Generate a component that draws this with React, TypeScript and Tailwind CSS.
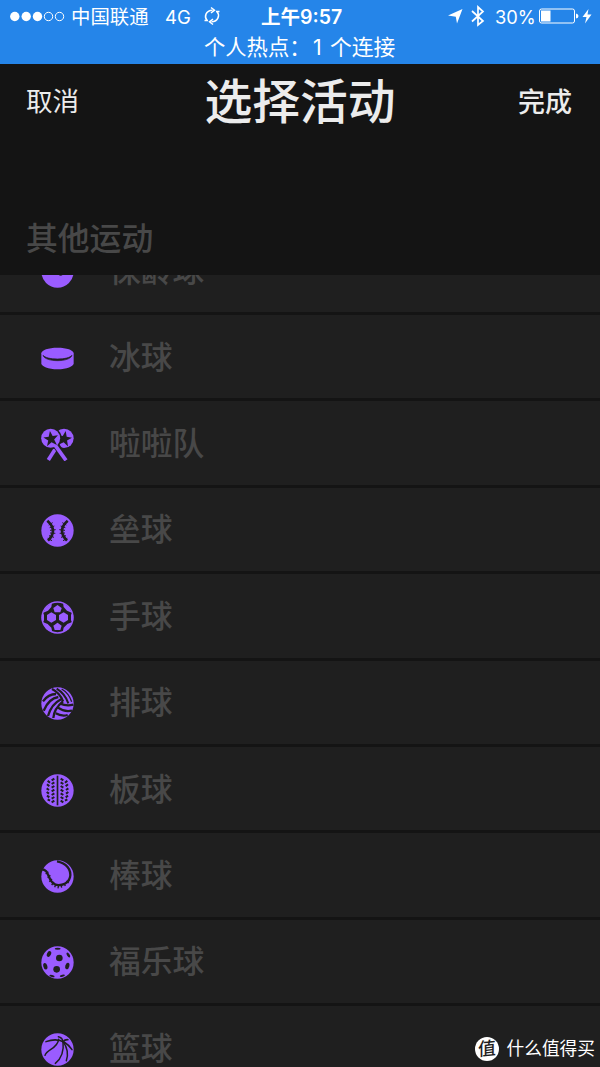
import type { ReactNode } from "react";

const INK = "#1f1f1f";
const PURPLE = "#9a5cff";

function Disc({ children }: { children?: ReactNode }) {
  return (
    <svg viewBox="0 0 99 99" className="block size-[33px]" fill={INK} stroke="none">
      <circle cx="49.5" cy="49.5" r="48.5" fill={PURPLE} />
      {children}
    </svg>
  );
}

const Bowling = () => (
  <Disc>
    <circle cx="59" cy="55" r="7" />
    <circle cx="42" cy="30" r="6" />
    <circle cx="66" cy="28" r="6" />
  </Disc>
);

const Puck = () => (
  <svg viewBox="0 0 99 99" className="block size-[33px]">
    <path d="M1 34C1 24 22 17 49.500 17S98 24 98 34V64C98 74 77 82 49.500 82S1 74 1 64Z" fill={PURPLE} />
    <path d="M6 40C10 51 29 56 49.500 56S89 51 93 40C87 47 70 51 49.500 51S12 47 6 40Z" fill={INK} stroke={INK} strokeWidth="2" />
  </svg>
);

const STAR = "M0 -23L6 -7L22 -7L9 4L15 21L0 11L-15 21L-9 4L-22 -7L-6 -7Z";

const PomPoms = () => (
  <svg viewBox="0 0 99 99" className="block size-[33px]">
    <path d="M56 42L22 96" stroke={PURPLE} strokeWidth="11" />
    <circle cx="69" cy="31" r="29" fill={PURPLE} />
    <path d={STAR} transform="translate(70 32) rotate(10)" fill={INK} />
    <path d="M41 46L78 99" stroke={INK} strokeWidth="20" />
    <circle cx="29" cy="31" r="33" fill={INK} />
    <path d="M41 50L75 97" stroke={PURPLE} strokeWidth="11" />
    <circle cx="29" cy="31" r="28.500" fill={PURPLE} />
    <path d={STAR} transform="translate(30 32) rotate(-8)" fill={INK} />
  </svg>
);

const Softball = () => (
  <Disc>
    <g fill="none" stroke={INK}>
      <path d="M19 20Q52 49 21 80" strokeWidth="8" />
      <path d="M80 20Q47 49 78 80" strokeWidth="8" />
      <path
        d="M23 33L35 26M26 41L40 36M27 49L44 47M27 57L43 58M24 65L39 70M20 73L33 80M76 33L64 26M73 41L59 36M72 49L55 47M72 57L56 58M75 65L60 70M79 73L66 80"
        strokeWidth="3"
      />
    </g>
  </Disc>
);

const Handball = () => (
  <Disc>
    <circle cx="49.500" cy="49.500" r="44" />
    <g fill={PURPLE}>
      <path d="M49.500 12L62 21L58 34H41L37 21Z" />
      <path d="M49.500 65L62 74L58 87H41L37 74Z" />
      <path d="M31 34L45 42V57L31 65L18 57V42Z" />
      <path d="M68 34L81 42V57L68 65L54 57V42Z" />
      <path d="M14 20L33 5L31 18L21 29L7 35Z" />
      <path d="M85 20L66 5L68 18L78 29L92 35Z" />
      <path d="M7 64L20 69L31 80L34 94L15 84Z" />
      <path d="M92 64L79 69L68 80L65 94L84 84Z" />
      <path d="M2 42L9 39V60L2 58ZM97 42L90 39V60L97 58Z" />
    </g>
  </Disc>
);

const Volleyball = () => (
  <Disc>
    <g fill="none" stroke={INK} strokeWidth="7">
      <path d="M33 6Q57 18 66 43" />
      <path d="M47 5Q72 20 82 49" strokeWidth="6" />
      <path d="M62 6Q83 18 92 44" strokeWidth="4" />
      <path d="M6 43Q22 21 45 21" />
      <path d="M8 71Q24 34 52 30" />
      <path d="M21 87Q31 52 60 37" />
      <path d="M37 93Q39 65 66 43" />
      <path d="M58 50Q76 58 97 53" />
      <path d="M51 62Q70 76 93 71" />
      <path d="M44 79Q62 89 80 84" />
    </g>
  </Disc>
);

const Cricket = () => (
  <Disc>
    <path d="M47 5H52V94H47Z" />
    <g fill="none" stroke={INK} strokeWidth="6">
      <path d="M40 14L32 19M40 25L32 30M40 36L32 41M40 47L32 52M40 58L32 63M40 69L32 74M40 80L32 85" />
      <path d="M59 14L67 19M59 25L67 30M59 36L67 41M59 47L67 52M59 58L67 63M59 69L67 74M59 80L67 85" />
      <path d="M20 20L27 26M18 31L25 37M17 43L24 48M17 54L24 59M18 65L25 70M20 76L27 80" />
      <path d="M79 20L72 26M81 31L74 37M82 43L75 48M82 54L75 59M81 65L74 70M79 76L72 80" />
    </g>
  </Disc>
);

const Baseball = () => (
  <Disc>
    <g fill="none" stroke={INK}>
      <path d="M2 28C21 28 20 49 32 65C46 83 81 76 87 52C92 30 77 9 48 4" strokeWidth="7" />
      <path
        d="M14 42L22 35M20 53L28 46M25 65L33 57M32 75L39 66M41 82L45 72M51 85L53 74M62 83L60 73M73 78L68 69M83 69L76 63"
        strokeWidth="4"
      />
    </g>
  </Disc>
);

const Floorball = () => (
  <Disc>
    <circle cx="55" cy="36" r="10" />
    <circle cx="47" cy="70" r="10" />
    <ellipse cx="24" cy="24" rx="6" ry="9" transform="rotate(25 24 24)" />
    <ellipse cx="13" cy="61" rx="6" ry="10" transform="rotate(-15 13 61)" />
    <ellipse cx="79" cy="60" rx="6" ry="10" transform="rotate(15 79 60)" />
    <ellipse cx="82" cy="27" rx="4" ry="8" transform="rotate(-35 82 27)" />
    <ellipse cx="50" cy="8" rx="9" ry="3" />
    <ellipse cx="33" cy="90" rx="8" ry="3" transform="rotate(15 33 90)" />
    <ellipse cx="64" cy="89" rx="8" ry="3" transform="rotate(-15 64 89)" />
  </Disc>
);

const Basketball = () => (
  <Disc>
    <g fill="none" stroke={INK} strokeWidth="4.500" strokeLinecap="round">
      <path d="M15 26Q64 8 93 50" />
      <path d="M12 67C17 47 49 49 53 19" />
      <path d="M52 11Q64 14 66 25C69 51 63 75 43 91" />
      <path d="M66 25Q86 53 76 83" />
      <path d="M81 20Q72 19 66 26" />
    </g>
  </Disc>
);

const activities = [
  { name: "冰球", Icon: Puck },
  { name: "啦啦队", Icon: PomPoms },
  { name: "垒球", Icon: Softball },
  { name: "手球", Icon: Handball },
  { name: "排球", Icon: Volleyball },
  { name: "板球", Icon: Cricket },
  { name: "棒球", Icon: Baseball },
  { name: "福乐球", Icon: Floorball },
  { name: "篮球", Icon: Basketball },
];

function ActivityRow({ name, Icon }: { name: string; Icon: () => ReactNode }) {
  return (
    <li className="flex h-[86.4px] shrink-0 items-center border-t-[3px] border-[#141414] bg-[#1f1f1f] pl-[41px]">
      <div className="mt-[3px]">
        <Icon />
      </div>
      <span className="mt-[2px] ml-[35px] text-[31.800px] leading-[48px] font-medium text-[#484848]">{name}</span>
    </li>
  );
}

function StatusBar() {
  return (
    <div className="h-16 shrink-0 bg-[#2585e9] text-white">
      <div className="flex h-8 items-center pl-[10px]">
        <svg className="h-8 w-[55px] shrink-0" viewBox="0 0 55 32" fill="white">
          <circle cx="4.800" cy="16.500" r="4.700" />
          <circle cx="16.200" cy="16.500" r="4.700" />
          <circle cx="27.500" cy="16.500" r="4.700" />
          <circle cx="38.500" cy="16.500" r="4.200" fill="none" stroke="white" />
          <circle cx="49.500" cy="16.500" r="4.200" fill="none" stroke="white" />
        </svg>
        <span className="mt-[2px] ml-[6px] w-[94px] text-[19.400px] leading-8">中国联通</span>
        <span className="mt-[2px] w-[38px] text-[18.500px] leading-8">4G</span>
        <svg className="h-5 w-[18px] shrink-0" viewBox="0 0 18 20" fill="none" stroke="white" strokeWidth="1.500">
          <path d="M4 14.500C1 11 2.500 4.500 9.500 4.200M14 5.500C17 9 15.500 15.500 8.500 15.800" />
          <path d="M8 1.500L11.500 4.200L8 7M10 13L6.500 15.800L10 18.500" />
          <path d="M1.500 14.500H5M13 5.500H16.500" />
        </svg>
        <span className="mt-[1px] ml-[40px] w-[187px] text-[19.500px] leading-8 font-semibold whitespace-nowrap">上午9:57</span>
        <svg className="h-5 w-[15px] shrink-0" viewBox="0 0 15 20" fill="white">
          <path d="M14.500 3L9 17.500L7.800 10.800L0 9.500Z" />
        </svg>
        <svg className="ml-[8px] h-[22px] w-[14px] shrink-0" viewBox="0 0 14 22" fill="none" stroke="white" strokeWidth="1.700">
          <path d="M1 6L12 16L7 20V2L12 6.500L1 16.500" />
        </svg>
        <span className="mt-[2px] ml-[10px] w-[44px] text-[18.300px] leading-8">30%</span>
        <svg className="h-4 w-[40px] shrink-0" viewBox="0 0 40 16" fill="none" stroke="white">
          <rect x="0.500" y="1" width="35" height="14" rx="2" />
          <rect x="2" y="2.500" width="9.500" height="11" fill="white" stroke="none" />
          <path d="M37 5.500Q39.500 6 39.500 8T37 10.500Z" fill="white" stroke="none" />
        </svg>
        <svg className="ml-[3px] h-4 w-[10px] shrink-0" viewBox="0 0 10 16" fill="white">
          <path d="M6.500 1L0.500 9H4.500L3 15.500L9.500 6.500H5.500Z" />
        </svg>
      </div>
      <div className="flex h-8 justify-center text-[21.300px] leading-[30px] whitespace-nowrap">
        <span className="w-[109px]">个人热点：</span>
        <span className="w-[17px]">1</span>
        <span className="w-[66px] text-[21.800px]">个连接</span>
      </div>
    </div>
  );
}

export default function App() {
  return (
    <main className="relative flex h-[1067px] w-[600px] flex-col overflow-hidden bg-[#141414] font-['Inter','Noto_Sans_CJK_SC',sans-serif]">
      <StatusBar />
      <header className="grid h-[72px] shrink-0 grid-cols-[1fr_auto_1fr] items-center pr-[28px] pl-[26px] text-[#ececec]">
        <button className="justify-self-start text-[26.600px] leading-[40px]">取消</button>
        <h1 className="relative left-px mt-[2px] text-[47.800px] leading-[72px] font-medium">选择活动</h1>
        <button className="mt-[3px] justify-self-end text-[27px] leading-[40px] font-medium">完成</button>
      </header>
      <h2 className="flex h-[139px] shrink-0 items-end pb-[12px] pl-[26px] text-[31.800px] leading-[48px] font-medium text-[#484848]">
        其他运动
      </h2>
      <ul className="flex min-h-0 flex-1 flex-col overflow-hidden">
        <li className="flex h-[37px] shrink-0 items-end overflow-hidden bg-[#1f1f1f] pl-[41px]">
          <div className="mb-[24px]">
            <Bowling />
          </div>
          <span className="mb-[17px] ml-[35px] text-[31.800px] leading-[48px] font-medium text-[#484848]">保龄球</span>
        </li>
        {activities.map((a) => (
          <ActivityRow key={a.name} {...a} />
        ))}
      </ul>
      <div className="absolute right-[5px] bottom-[6px] flex items-center text-white">
        <span className="flex size-6 items-center justify-center rounded-full bg-white text-[18px] leading-6 font-medium text-[#1f1f1f]">
          <span className="-skew-x-6 -rotate-6">值</span>
        </span>
        <span className="ml-[8px] text-[17.700px] leading-6">什么值得买</span>
      </div>
    </main>
  );
}
